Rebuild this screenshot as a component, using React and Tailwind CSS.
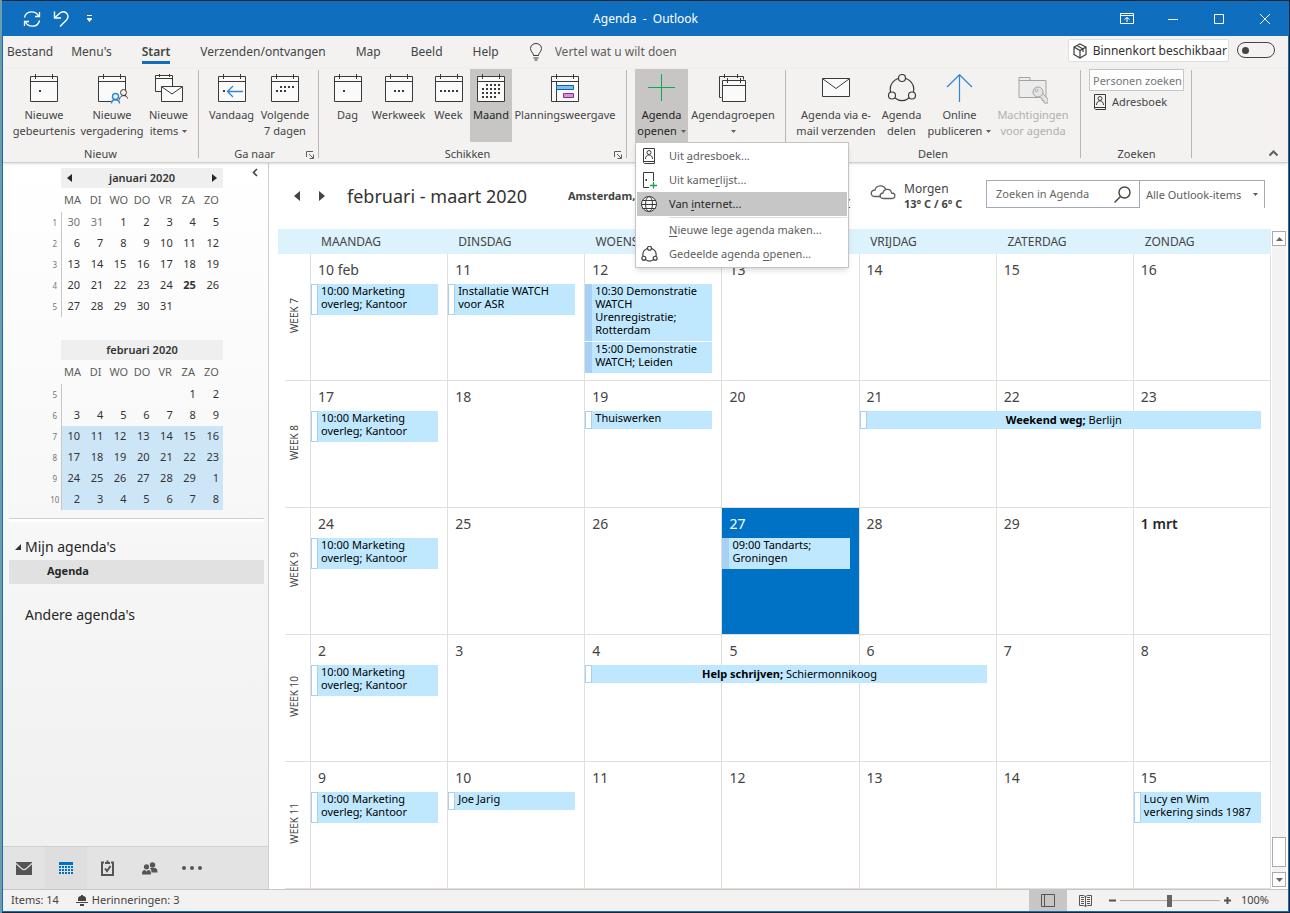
import clsx from 'clsx';

const ink = '#3b3a39';

const COL_START = ['col-start-1', 'col-start-2', 'col-start-3', 'col-start-4', 'col-start-5', 'col-start-6', 'col-start-7'];
const COL_SPAN = { 1: 'col-span-1', 3: 'col-span-3' };

const tabs = ['Bestand', "Menu's", 'Start', 'Verzenden/ontvangen', 'Map', 'Beeld', 'Help'];

const weekdays = ['MAANDAG', 'DINSDAG', 'WOENSDAG', 'DONDERDAG', 'VRIJDAG', 'ZATERDAG', 'ZONDAG'];

const marketing = { col: 0, items: [{ text: '10:00 Marketing overleg; Kantoor' }] };

const weeks = [
  {
    label: 'WEEK 7',
    days: ['10 feb', '11', '12', '13', '14', '15', '16'],
    events: [
      marketing,
      { col: 1, items: [{ text: 'Installatie WATCH voor ASR' }] },
      {
        col: 2,
        items: [
          { text: '10:30 Demonstratie WATCH Urenregistratie; Rotterdam', busy: true },
          { text: '15:00 Demonstratie WATCH; Leiden', busy: true },
        ],
      },
    ],
  },
  {
    label: 'WEEK 8',
    days: ['17', '18', '19', '20', '21', '22', '23'],
    events: [
      marketing,
      { col: 2, items: [{ text: 'Thuiswerken' }] },
      { col: 4, span: 3, items: [{ title: 'Weekend weg;', text: 'Berlijn' }] },
    ],
  },
  {
    label: 'WEEK 9',
    days: ['24', '25', '26', '27', '28', '29', '1 mrt'],
    today: 3,
    events: [marketing, { col: 3, items: [{ text: '09:00 Tandarts; Groningen', busy: true }] }],
  },
  {
    label: 'WEEK 10',
    days: ['2', '3', '4', '5', '6', '7', '8'],
    events: [marketing, { col: 2, span: 3, items: [{ title: 'Help schrijven;', text: 'Schiermonnikoog' }] }],
  },
  {
    label: 'WEEK 11',
    days: ['9', '10', '11', '12', '13', '14', '15'],
    events: [
      marketing,
      { col: 1, items: [{ text: 'Joe Jarig' }] },
      { col: 6, items: [{ text: 'Lucy en Wim verkering sinds 1987' }] },
    ],
  },
];

const january = [
  [1, ['30', '31', '1', '2', '3', '4', '5']],
  [2, ['6', '7', '8', '9', '10', '11', '12']],
  [3, ['13', '14', '15', '16', '17', '18', '19']],
  [4, ['20', '21', '22', '23', '24', '25', '26']],
  [5, ['27', '28', '29', '30', '31', '', '']],
];

const february = [
  [5, ['', '', '', '', '', '1', '2']],
  [6, ['3', '4', '5', '6', '7', '8', '9']],
  [7, ['10', '11', '12', '13', '14', '15', '16']],
  [8, ['17', '18', '19', '20', '21', '22', '23']],
  [9, ['24', '25', '26', '27', '28', '29', '1']],
  [10, ['2', '3', '4', '5', '6', '7', '8']],
];

/* ---------- icons ---------- */

function CalendarIcon({ children, dots = [] }) {
  return (
    <svg width="32" height="30" viewBox="-2 0 32 30" fill="none" stroke={ink}>
      <path d="M.5 2.5h27v25H.5z" fill="#fafafa" />
      <path d="M.5 7.5h27M5.5 0v5M22.5 0v5" />
      {dots.map(([x, y]) => (
        <rect key={`${x}-${y}`} x={x} y={y} width="2" height="2" fill={ink} stroke="none" />
      ))}
      {children}
    </svg>
  );
}

const row = (y, xs) => xs.map((x) => [x, y]);
const monthDots = [
  ...row(10, [9, 13, 17, 21]),
  ...row(14, [5, 9, 13, 17, 21]),
  ...row(18, [5, 9, 13, 17, 21]),
  ...row(22, [5, 9, 13, 17]),
];

function MeetingIcon() {
  return (
    <CalendarIcon>
      <path d="M13 22h16v8H13z" fill="#f3f2f1" stroke="none" />
      <circle cx="25.5" cy="18.5" r="3" fill="#f3f2f1" />
      <path d="M21.5 25.5c0-5 8-5 8-1" />
      <g stroke="#2b88d8" strokeWidth="1.4">
        <circle cx="17.5" cy="22.5" r="3" fill="#f3f2f1" />
        <path d="M13.5 29.5c0-5 8-5 8 0" />
      </g>
    </CalendarIcon>
  );
}

function NewItemsIcon() {
  return (
    <svg width="30" height="30" viewBox="0 0 30 30" fill="none" stroke={ink}>
      <path d="M1.5 1.5h17v16h-17z" fill="#fafafa" />
      <path d="M1.5 4.5h17M5.5 0v3M15.5 0v3" />
      <path d="M7.5 12.5h21v15h-21z" fill="#fafafa" />
      <path d="m8 13 10 7 10-7" />
    </svg>
  );
}

function PlanningIcon() {
  return (
    <CalendarIcon>
      <path d="M5.5 8v19" />
      <path d="M5.5 11.5h17v4h-17z" fill="#83beec" stroke="#0063b1" />
      <path d="M12.5 19.5h10v4h-10z" fill="#da8fd8" stroke="#8b2f95" />
    </CalendarIcon>
  );
}

function PlusIcon() {
  return (
    <svg width="30" height="30" viewBox="0 0 30 30" stroke="#10a850">
      <path d="M14.5 0v27M1 13.5h27" />
    </svg>
  );
}

function GroupsIcon() {
  return (
    <svg width="30" height="30" viewBox="0 0 30 30" fill="none" stroke={ink}>
      <path d="M3.5 23.5h-2v-21h24v3M6.5 0v4M19.5 0v4" />
      <path d="M4.5 6.5h23v21h-23z" fill="#fafafa" />
      <path d="M4.5 11.5h23M9.5 4v5M22.5 4v5" />
    </svg>
  );
}

function MailIcon() {
  return (
    <svg width="30" height="30" viewBox="0 0 30 30" fill="none" stroke={ink}>
      <path d="M1.5 4.5h27v18h-27z" fill="#fafafa" />
      <path d="m2 5 13 9.5L28 5" />
    </svg>
  );
}

function ShareIcon({ size = 30 }) {
  return (
    <svg width={size} height={size} viewBox="0 0 30 30" fill="none" stroke={ink} strokeWidth={size < 20 ? 2 : 1.2}>
      <path d="M11 4.5C5 7 2.5 12 3.5 18M19 4.5c6 2.5 8.5 7.5 7.5 13.5M8 24c4.5 3.5 9.5 3.5 14 0" />
      <circle cx="15" cy="4" r="3.5" />
      <circle cx="5" cy="21.5" r="3.5" />
      <circle cx="25" cy="21.5" r="3.5" />
    </svg>
  );
}

function PublishIcon() {
  return (
    <svg width="30" height="30" viewBox="0 0 30 30" fill="none" stroke="#2b88d8" strokeWidth="1.2">
      <path d="M14.5 28V1M2 13 14.5.7 27 13" />
    </svg>
  );
}

function PermissionsIcon() {
  return (
    <svg width="30" height="30" viewBox="0 0 30 30" fill="#ececec" stroke="#a3a3a3">
      <path d="M1 3.5h11v3h16v17H1z" />
      <path d="M1 6.5h11" />
      <path d="M23.5 18.5 30 25v4h-4v-2.5h-2V24h-2l-2-2z" fill="#e4e4e4" />
      <circle cx="20" cy="18" r="5" fill="#e4e4e4" />
      <circle cx="18.5" cy="16.5" r="1.2" fill="#fff" />
    </svg>
  );
}

function AddressBookIcon() {
  return (
    <svg width="16" height="18" viewBox="0 0 16 18" fill="none" stroke={ink}>
      <path d="M2.5 1.5h11v15h-10l-1-1zM2.5 14.5h11" />
      <circle cx="8" cy="5.5" r="2" />
      <path d="M4.5 12c0-5.5 7-5.5 7 0" />
    </svg>
  );
}

function RoomIcon() {
  return (
    <svg width="16" height="18" viewBox="0 0 16 18" fill="none" stroke={ink}>
      <path d="M8 16.5H2.5v-15h10V10" />
      <path d="M4.5 9h1.5" strokeWidth="2" />
      <path d="M12.5 11v6.5M9 14.5h7" stroke="#10a850" strokeWidth="1.3" />
    </svg>
  );
}

function GlobeIcon() {
  return (
    <svg width="18" height="18" viewBox="0 0 18 18" fill="none" stroke={ink}>
      <circle cx="9" cy="9" r="7.5" fill="#fafafa" />
      <ellipse cx="9" cy="9" rx="3.5" ry="7.5" />
      <path d="M2.5 5.5h13M1.5 9.5h15M2.5 13.5h13" />
    </svg>
  );
}

function Caret({ className }) {
  return (
    <svg width="5" height="3" viewBox="0 0 5 3" className={clsx('inline-block', className)} fill="#605e5c">
      <path d="M0 0h5L2.5 3z" />
    </svg>
  );
}

function Launcher() {
  return (
    <svg width="8" height="8" viewBox="0 0 8 8" fill="none" stroke="#605e5c">
      <path d="M.5 6V.5H7M3 3l4 4M7.5 3.5v4h-4" />
    </svg>
  );
}

/* ---------- title bar and tabs ---------- */

function TitleBar() {
  return (
    <header className="grid h-[35px] grid-cols-[1fr_auto_1fr] items-center bg-[#106ebe] text-white">
      <div className="flex items-center pl-5">
        <button aria-label="Verzenden/ontvangen" className="w-[30px]">
          <svg width="18" height="18" viewBox="0 0 18 18" fill="none" stroke="#fff" strokeWidth="1.3">
            <path d="M1.5 7.5C3 0 13 .5 15.5 6M16.5 2v4.5H12M16.5 10.5C15 18 5 17.5 2.5 12M1.5 16v-4.5H6" />
          </svg>
        </button>
        <button aria-label="Ongedaan maken" className="w-[33px]">
          <svg width="17" height="18" viewBox="0 0 17 18" fill="none" stroke="#fff" strokeWidth="1.4">
            <path d="M1.5 1.5V8H8M1.5 8 7 3c6-4 10 3 6.5 7L7 16.5" />
          </svg>
        </button>
        <button aria-label="Snelle toegang aanpassen">
          <svg width="7" height="8" viewBox="0 0 7 8" fill="#fff">
            <path d="M1 0h5v1H1zM1 3h5v1H1zM1 4h5L3.5 7z" />
          </svg>
        </button>
      </div>
      <h1 className="text-xs whitespace-pre">Agenda  -  Outlook</h1>
      <div className="flex justify-end">
        <button aria-label="Weergaveopties voor lint" className="flex w-[46px] justify-center">
          <svg width="14" height="12" viewBox="0 0 14 12" fill="none" stroke="#fff">
            <path d="M.5.5h13v10H.5zM.5 2.5h13M7 9V4.5M4.5 6.5 7 4.5l2.5 2" />
          </svg>
        </button>
        <button aria-label="Minimaliseren" className="flex w-[46px] justify-center">
          <svg width="10" height="12" stroke="#fff">
            <path d="M0 6.5h10" />
          </svg>
        </button>
        <button aria-label="Maximaliseren" className="flex w-[46px] justify-center">
          <svg width="10" height="12" fill="none" stroke="#fff">
            <path d="M.5 1.5h9v9h-9z" />
          </svg>
        </button>
        <button aria-label="Sluiten" className="flex w-[46px] justify-center">
          <svg width="10" height="12" stroke="#fff">
            <path d="m0 1 10 10M10 1 0 11" />
          </svg>
        </button>
      </div>
    </header>
  );
}

function TabRow() {
  return (
    <div className="flex h-[33px] items-start text-xs text-[#444]">
      <nav className="flex">
        {tabs.map((tab, i) => (
          <button
            key={tab}
            className={clsx('flex flex-col pt-[7px] leading-[18px]', i === 0 ? 'pr-[3px] pl-1' : 'px-[15px]', tab === 'Start' && 'font-semibold')}
          >
            {tab}
            {tab === 'Start' && <span className="h-[3px] w-full bg-[#106ebe]" />}
          </button>
        ))}
      </nav>
      <label className="ml-4 flex gap-[13px] pt-[7px] leading-[18px] text-[#605e5c]">
        <svg width="12" height="18" viewBox="0 0 12 18" fill="none" stroke={ink}>
          <path d="M3.5 12.5c0-3-3-3.5-3-7C.5 2.5 3 .5 6 .5s5.5 2 5.5 5c0 3.5-3 4-3 7zM3.5 15h5M4.5 17h3" />
        </svg>
        <input
          className="w-[200px] bg-transparent placeholder:text-[#605e5c] outline-none"
          placeholder="Vertel wat u wilt doen"
          aria-label="Vertel wat u wilt doen"
        />
      </label>
      <div className="ml-auto flex items-start gap-2 pt-[3px] pr-[13px]">
        <label
          htmlFor="coming-soon"
          className="flex h-[23px] items-center gap-1.5 rounded-xs border border-[#e1dfdd] bg-white pr-px pl-1 whitespace-nowrap text-[#323130]"
        >
          <svg width="14" height="16" viewBox="0 0 14 16" fill="none" stroke={ink} strokeWidth="1.2">
            <path d="m7 1 6 3v7.5l-6 3.5-6-3.5V4zM1 4l6 3.5L13 4M7 7.5V15M4 2.5l6 3.5v3" />
          </svg>
          Binnenkort beschikbaar
        </label>
        <input
          id="coming-soon"
          type="checkbox"
          role="switch"
          className="mt-[3px] flex h-4 w-[38px] appearance-none items-center rounded-full border border-[#444] bg-transparent pl-1 before:size-[7px] before:rounded-full before:bg-[#444]"
        />
      </div>
    </div>
  );
}

/* ---------- ribbon ---------- */

function RibbonButton({ icon, lines, width, active, disabled, caret }) {
  return (
    <button
      disabled={disabled}
      className={clsx(
        'flex h-[73px] flex-col items-center pt-[5px] text-[11px] leading-4 whitespace-nowrap',
        width,
        active && 'bg-[#c8c6c4] text-[#201f1e]',
        disabled && 'text-[#b1afad]'
      )}
    >
      <span className="flex h-[33px] items-start">{icon}</span>
      {lines.map((line, i) => (
        <span key={line}>
          {line}
          {caret && i === lines.length - 1 && <Caret className={clsx('mb-0.5', line && 'ml-1')} />}
        </span>
      ))}
    </button>
  );
}

function RibbonGroup({ label, launcher, children, className }) {
  return (
    <>
      <section className={clsx('flex flex-col', className)}>
        <div className="flex h-[73px] items-start">{children}</div>
        {label && (
          <div className="mt-1 flex items-center text-[11px] leading-4">
            <span className="flex-1 text-center">{label}</span>
            {launcher && (
              <button aria-label={`${label}: meer`} className="ml-1 pt-0.5">
                <Launcher />
              </button>
            )}
          </div>
        )}
      </section>
      <div className="mt-px mb-1 w-px bg-[#b9b7b5]" />
    </>
  );
}

const menuItems = [
  { icon: <AddressBookIcon />, text: ['Uit ', 'a', 'dresboek...'] },
  { icon: <RoomIcon />, text: ['Uit kame', 'r', 'lijst...'] },
  { icon: <GlobeIcon />, text: ['Van ', 'i', 'nternet...'], active: true },
  { divider: true },
  { text: ['', 'N', 'ieuwe lege agenda maken...'] },
  { icon: <ShareIcon size={17} />, text: ['Gedeelde agenda ', 'o', 'penen...'] },
];

function OpenMenu() {
  return (
    <div role="menu" className="absolute top-full left-0 z-10 w-[214px] border border-[#c6c4c2] bg-white p-px shadow-md">
      {menuItems.map(({ icon, text, active, divider }, i) =>
        divider ? (
          <div key={i} className="ml-8 h-0.5 border-b border-[#e1dfdd]" />
        ) : (
          <button
            key={i}
            role="menuitem"
            className={clsx('flex h-6 w-full items-center text-[11px]', active ? 'bg-[#c6c6c6] text-[#262626]' : 'text-[#605e5c]')}
          >
            <span className="flex w-6 justify-center">{icon}</span>
            <span className="ml-2 whitespace-pre">
              {text[0]}
              <u className="underline-offset-2">{text[1]}</u>
              {text[2]}
            </span>
          </button>
        )
      )}
    </div>
  );
}

function Ribbon() {
  return (
    <div className="relative z-10 flex h-[94px] border-b border-[#d2d0ce] text-[#444] shadow-sm">
      <RibbonGroup label="Nieuw" className="px-[7px]">
        <RibbonButton width="w-[68px]" lines={['Nieuwe', 'gebeurtenis']} icon={<CalendarIcon dots={[[9, 16]]} />} />
        <RibbonButton width="w-[68px]" lines={['Nieuwe', 'vergadering']} icon={<MeetingIcon />} />
        <RibbonButton width="w-[45px]" lines={['Nieuwe', 'items']} caret icon={<NewItemsIcon />} />
      </RibbonGroup>
      <RibbonGroup label="Ga naar" launcher className="pr-1 pl-2">
        <RibbonButton
          width="w-[49px]"
          lines={['Vandaag']}
          icon={
            <CalendarIcon dots={[[5, 16]]}>
              <path d="M25 17.5H10M15 12l-5.5 5.5L15 23" stroke="#2b88d8" strokeWidth="1.3" />
            </CalendarIcon>
          }
        />
        <RibbonButton
          width="w-[58px]"
          lines={['Volgende', '7 dagen']}
          icon={<CalendarIcon dots={[...row(12, [9, 13, 17, 21]), ...row(16, [5, 9, 13])]} />}
        />
      </RibbonGroup>
      <RibbonGroup label="Schikken" launcher className="pr-1 pl-1.5">
        <RibbonButton width="w-[45px]" lines={['Dag']} icon={<CalendarIcon dots={[[9, 16]]} />} />
        <RibbonButton width="w-[57px]" lines={['Werkweek']} icon={<CalendarIcon dots={row(16, [9, 13, 17])} />} />
        <RibbonButton width="w-[43px]" lines={['Week']} icon={<CalendarIcon dots={row(16, [5, 9, 13, 17, 21])} />} />
        <RibbonButton width="w-[42px]" lines={['Maand']} active icon={<CalendarIcon dots={monthDots} />} />
        <RibbonButton width="w-[106px]" lines={['Planningsweergave']} icon={<PlanningIcon />} />
        <div className="w-1" />
      </RibbonGroup>
      <RibbonGroup className="pr-[7px] pl-2">
        <div className="relative">
          <RibbonButton width="w-[53px]" lines={['Agenda', 'openen']} caret active icon={<PlusIcon />} />
          <OpenMenu />
        </div>
        <RibbonButton width="w-[90px]" lines={['Agendagroepen', '']} caret icon={<GroupsIcon />} />
      </RibbonGroup>
      <RibbonGroup label="Delen" className="px-2">
        <RibbonButton width="w-[84px]" lines={['Agenda via e-', 'mail verzenden']} icon={<MailIcon />} />
        <RibbonButton width="w-[47px]" lines={['Agenda', 'delen']} icon={<ShareIcon />} />
        <RibbonButton width="w-[69px]" lines={['Online', 'publiceren']} caret icon={<PublishIcon />} />
        <RibbonButton width="w-[78px]" lines={['Machtigingen', 'voor agenda']} disabled icon={<PermissionsIcon />} />
      </RibbonGroup>
      <RibbonGroup label="Zoeken" className="pr-[7px] pl-2">
        <div className="flex flex-col items-start gap-0.5">
          <input
            className="h-[22px] w-[95px] border border-[#c8c6c4] bg-white pl-[3px] text-[11px] placeholder:text-[#767676] outline-none"
            placeholder="Personen zoeken"
            aria-label="Personen zoeken"
          />
          <button className="flex items-center gap-1 pl-[3px] text-[11px] leading-4">
            <AddressBookIcon />
            Adresboek
          </button>
        </div>
      </RibbonGroup>
      <button aria-label="Lint samenvouwen" className="mt-auto mr-2.5 mb-1 ml-auto">
        <svg width="9" height="9" viewBox="0 0 9 9" fill="none" stroke="#605e5c" strokeWidth="2">
          <path d="m.5 6.5 4-4 4 4" />
        </svg>
      </button>
    </div>
  );
}

/* ---------- sidebar ---------- */

function MiniMonth({ title, rows, nav, boldDay, mutedDays = [], selectedFrom = 99 }) {
  return (
    <div>
      <div className="ml-3 flex h-5 items-center justify-center bg-[#efefef]">
        {nav && (
          <button aria-label="Vorige maand" className="ml-1.5">
            <svg width="5" height="8" fill="#262626">
              <path d="M5 0v8L0 4z" />
            </svg>
          </button>
        )}
        <h2 className="flex-1 text-center text-[11px] font-semibold text-[#333]">{title}</h2>
        {nav && (
          <button aria-label="Volgende maand" className="mr-1.5">
            <svg width="5" height="8" fill="#262626">
              <path d="M0 0v8l5-4z" />
            </svg>
          </button>
        )}
      </div>
      <table className="w-full table-fixed border-collapse text-[11px] text-[#333]">
        <thead>
          <tr className="h-6 text-[#605e5c]">
            <th className="w-3" />
            {['MA', 'DI', 'WO', 'DO', 'VR', 'ZA', 'ZO'].map((d) => (
              <th key={d} className="p-0 text-center font-normal">
                {d}
              </th>
            ))}
          </tr>
        </thead>
        <tbody>
          {rows.map(([week, days]) => (
            <tr key={week} className="h-[21px]">
              <th className="border-r border-[#c8c6c4] p-0 text-[8px] font-normal text-[#767676]">{week}</th>
              {days.map((day, i) => (
                <td
                  key={i}
                  className={clsx(
                    'p-0 pr-1 text-right',
                    week >= selectedFrom && 'bg-[#cde6f7]',
                    day && day === boldDay && 'font-bold',
                    week === 1 && mutedDays.includes(day) && 'text-[#767676]'
                  )}
                >
                  {day}
                </td>
              ))}
            </tr>
          ))}
        </tbody>
      </table>
    </div>
  );
}

function NavBar() {
  return (
    <nav className="flex h-[43px] border-t border-[#d0d0d0] bg-[#e3e3e3]">
      <button aria-label="E-mail" className="flex w-[42px] items-center justify-center">
        <svg width="16" height="13" viewBox="0 0 16 13" fill="#555">
          <path d="M0 0h16v13H0z" />
          <path d="m0 1.5 5.5 5c1.5 1.3 3.5 1.3 5 0l5.5-5" fill="none" stroke="#e3e3e3" strokeWidth="1.2" />
        </svg>
      </button>
      <button aria-label="Agenda" className="flex w-[42px] items-center justify-center bg-[#dedede]">
        <svg width="14" height="12" viewBox="0 0 14 12" fill="#0072c6">
          <path d="M0 0h14v3H0z" />
          {[4, 7, 10].map((y) => [0, 3, 6, 9, 12].map((x) => <path key={`${x}-${y}`} d={`M${x} ${y}h2v2h-2z`} />))}
        </svg>
      </button>
      <button aria-label="Taken" className="flex w-[41px] items-center justify-center">
        <svg width="13" height="16" viewBox="0 0 13 16" fill="none" stroke="#555" strokeWidth="2">
          <path d="M3 2.5H1V15h11V2.5h-2" />
          <path d="M4 3h5M6.500.5v2M4 8.500l2 2.500 3.500-5" />
        </svg>
      </button>
      <button aria-label="Personen" className="flex w-[43px] items-center justify-center">
        <svg width="16" height="13" viewBox="0 0 16 13" fill="#555">
          <circle cx="10.5" cy="3" r="2.7" />
          <path d="M7.5 6h5c2.5 0 3 1.5 3 4.5H9.5C9.5 8 9 7 7.5 6z" />
          <circle cx="4.5" cy="4.8" r="2.6" />
          <path d="M0 12.5C0 9 1 8 3 8l1.5 1.5L6 8c2 0 3 1 3 4.500z" />
        </svg>
      </button>
      <button aria-label="Meer" className="flex w-[42px] items-center justify-center">
        <svg width="20" height="4" fill="#555">
          <circle cx="2" cy="2" r="2" />
          <circle cx="10" cy="2" r="2" />
          <circle cx="18" cy="2" r="2" />
        </svg>
      </button>
    </nav>
  );
}

function Sidebar() {
  return (
    <aside className="flex w-[266px] shrink-0 flex-col border-r border-[#d2d0ce] bg-linear-to-b from-white to-[#efefef]">
      <div className="flex items-start pt-[5px] pr-2.5 pl-[46px]">
        <div className="flex w-[174px] flex-col gap-[23px]">
          <MiniMonth title="januari 2020" rows={january} nav boldDay="25" mutedDays={['30', '31']} />
          <MiniMonth title="februari 2020" rows={february} selectedFrom={7} />
        </div>
        <button aria-label="Mappenvenster minimaliseren" className="ml-auto">
          <svg width="6" height="9" viewBox="0 0 6 9" fill="none" stroke="#444" strokeWidth="1.6">
            <path d="m5 1-3.5 3.5L5 8" />
          </svg>
        </button>
      </div>
      <div className="mt-2 mr-1 ml-1.5 h-1 border-t border-[#d2d0ce] bg-white" />
      <div className="mr-1 ml-1.5 text-[#262626]">
        <h2 className="mt-[13px] flex h-6 items-center gap-1 pl-1.5 text-sm">
          <svg width="6" height="6" fill="#333">
            <path d="M6 0v6H0z" />
          </svg>
          Mijn agenda's
        </h2>
        <button className="mt-px block h-6 w-full bg-[#e1e1e1] pb-0.5 pl-[38px] text-left text-[11px] font-bold">Agenda</button>
        <h2 className="mt-[19px] flex h-6 items-center pl-4 text-sm">Andere agenda's</h2>
      </div>
      <div className="mt-auto">
        <NavBar />
      </div>
    </aside>
  );
}

/* ---------- month view ---------- */

function CalendarHeader() {
  return (
    <div className="flex h-[66px] items-center pr-[23px] pl-6 text-[#444]">
      <button aria-label="Vorige">
        <svg width="7" height="10" fill="#444">
          <path d="M7 0v10L1 5z" />
        </svg>
      </button>
      <button aria-label="Volgende" className="ml-[19px]">
        <svg width="7" height="10" fill="#444">
          <path d="M0 0v10l6-5z" />
        </svg>
      </button>
      <h2 className="ml-[21px] w-[221px] text-lg whitespace-nowrap text-[#333]">februari - maart 2020</h2>
      <div className="flex flex-1 items-center">
        <span className="w-[275px] text-[11px] font-bold">Amsterdam,</span>
        <span className="w-2 pt-4 text-xs">C</span>
        <svg width="26" height="16" viewBox="0 0 26 16" fill="none" stroke="#605e5c" strokeWidth="1.3" className="-mt-2 ml-[19px]">
          <path d="M11 12.5H5C0 12.5 0 6 5 6c1-5 9-6 11 0" />
          <path d="M14 14.5c-5 0-5-5-1-5.5 1-5 8-4.5 8.5 0 4.5 0 4.5 5.5 0 5.5z" fill="#fff" />
        </svg>
        <div className="ml-2 leading-[15px] whitespace-nowrap">
          <div className="text-xs leading-[15px]">Morgen</div>
          <div className="text-[11px] font-bold">13° C / 6° C</div>
        </div>
      </div>
      <form className="mb-1 flex h-7 border border-[#a3aab5]">
        <input
          type="search"
          className="w-[127px] pl-[9px] text-[11px] placeholder:text-[#666] outline-none"
          placeholder="Zoeken in Agenda"
          aria-label="Zoeken in Agenda"
        />
        <button type="button" aria-label="Zoeken" className="w-[25px]">
          <svg width="17" height="17" viewBox="0 0 17 17" fill="none" stroke="#444" strokeWidth="1.4">
            <circle cx="10.5" cy="6.5" r="5.5" />
            <path d="M6.500 10.500.5 16.500" />
          </svg>
        </button>
        <div className="relative border-l border-[#a3aab5]">
          <select aria-label="Zoekbereik" className="h-full w-[124px] appearance-none bg-white pl-1.5 text-[11px] text-[#605e5c] outline-none">
            <option>Alle Outlook-items</option>
          </select>
          <Caret className="pointer-events-none absolute top-3 right-1.5" />
        </div>
      </form>
    </div>
  );
}

function Event({ title, text, busy }) {
  return (
    <div className="mr-[9px] flex bg-[#bfe8ff] text-[11px] leading-[13px] text-black">
      <span className={clsx('w-[7px] shrink-0 border border-[#a6d1f5]', busy ? 'bg-[#a6d1f5]' : 'bg-white')} />
      <span className={clsx('flex-1', title ? 'pt-0.5 pb-[3px] text-center' : 'pr-2 pb-[5px] pl-[3px]')}>
        {title && <b className="font-bold">{title} </b>}
        {text}
      </span>
    </div>
  );
}

function WeekRow({ label, days, today, events }) {
  return (
    <div className="ml-[7px] flex min-h-[127px] flex-1 border-b border-[#e1dfdd]">
      <div className="flex w-[25px] items-center justify-center pr-1.5 pb-1 text-[10px] text-[#444]">
        <span className="rotate-180 [writing-mode:vertical-rl]">{label}</span>
      </div>
      <div className="grid flex-1 grid-cols-7 grid-rows-[30px_1fr] border-r border-[#e1dfdd]">
        {days.map((day, i) => (
          <div
            key={day}
            className={clsx(
              'row-span-2 row-start-1 border-l border-[#e1dfdd] pt-1.5 pl-[7px] text-sm leading-5',
              COL_START[i],
              i === today ? 'bg-[#0072c6] text-white' : 'text-[#444]',
              day === '1 mrt' && 'font-semibold text-[#262626]'
            )}
          >
            {day}
          </div>
        ))}
        {events.map(({ col, span = 1, items }) => (
          <div key={col} className={clsx('row-start-2 ml-px flex flex-col gap-px', COL_START[col], COL_SPAN[span])}>
            {items.map((item) => (
              <Event key={item.text} {...item} />
            ))}
          </div>
        ))}
      </div>
    </div>
  );
}

function ScrollBar() {
  const box = 'flex items-center justify-center border border-[#ababab] bg-white';
  return (
    <div className="mt-0.5 mr-0.5 mb-0.5 ml-px flex w-[14px] flex-col bg-[#f3f3f3]">
      <button aria-label="Omhoog" className={clsx(box, 'h-[15px]')}>
        <svg width="7" height="4" fill="#666">
          <path d="M0 4h7L3.5 0z" />
        </svg>
      </button>
      <div className="mt-auto mb-[5px] h-[30px] border border-[#ababab] bg-white" />
      <button aria-label="Omlaag" className={clsx(box, 'h-[15px]')}>
        <svg width="7" height="4" fill="#666">
          <path d="M0 0h7L3.5 4z" />
        </svg>
      </button>
    </div>
  );
}

function MonthView() {
  return (
    <main className="flex min-w-0 flex-1 flex-col bg-white">
      <CalendarHeader />
      <div className="flex flex-1">
        <div className="ml-[9px] flex flex-1 flex-col">
          <div className="flex h-[25px] items-center bg-[#dcf2fd] pl-8 text-xs text-[#444]">
            {weekdays.map((d) => (
              <div key={d} className="flex-1 pl-[11px]">
                {d}
              </div>
            ))}
          </div>
          {weeks.map((week) => (
            <WeekRow key={week.label} {...week} />
          ))}
        </div>
        <ScrollBar />
      </div>
    </main>
  );
}

function StatusBar() {
  return (
    <footer className="flex h-[22px] items-center border-t border-[#c8c6c4] text-[11px] text-[#444]">
      <span className="ml-2">Items: 14</span>
      <button className="ml-[17px] flex items-center gap-1">
        <svg width="12" height="11" viewBox="0 0 12 11" fill="#444">
          <path d="M5 0h2v1c2 0 3 1 3 3v2H2V4c0-2 1-3 3-3zM4 9h4v2H4zM0 7h12v1H0z" />
        </svg>
        Herinneringen: 3
      </button>
      <button aria-label="Normaal" className="ml-auto flex h-full w-[38px] items-center justify-center bg-[#c8c6c4]">
        <svg width="14" height="13" fill="none" stroke="#555">
          <path d="M.5.5h13v12H.5zM3.500.5v12" />
        </svg>
      </button>
      <button aria-label="Lezen" className="flex h-full w-[38px] items-center justify-center">
        <svg width="13" height="13" viewBox="0 0 13 13" fill="none" stroke="#555">
          <path d="M.5 1.5h4l2 1 2-1h4v10h-4l-2 1-2-1h-4zM6.5 2v10M2 3.5h3M2 5.5h3M2 7.5h3M2 9.5h3M8 3.5h3M8 5.5h3M8 7.5h3M8 9.5h3" />
        </svg>
      </button>
      <button aria-label="Uitzoomen" className="ml-1">
        <svg width="7" height="7" fill="#555">
          <path d="M0 2.500h7v2H0z" />
        </svg>
      </button>
      <input
        type="range"
        aria-label="Zoomen"
        defaultValue="50"
        className="mx-1 h-3 w-[100px] appearance-none bg-linear-to-b from-transparent from-45% via-[#ababab] via-45% to-transparent to-55% [&::-webkit-slider-thumb]:h-3 [&::-webkit-slider-thumb]:w-[5px] [&::-webkit-slider-thumb]:appearance-none [&::-webkit-slider-thumb]:bg-[#666]"
      />
      <button aria-label="Inzoomen">
        <svg width="7" height="7" fill="#555">
          <path d="M0 2.5h7v2H0zM2.500 0h2v7h-2z" />
        </svg>
      </button>
      <span className="mr-[19px] ml-2.5">100%</span>
    </footer>
  );
}

export default function App() {
  return (
    <div className="flex min-h-screen flex-col border-l-2 border-[#6c9cae] bg-[#1d2733] pt-px pr-px pb-px font-['Noto_Sans','Segoe_UI',sans-serif]">
      <div className="flex flex-1 flex-col border-x border-b border-[#106ebe] bg-[#f3f2f1]">
        <TitleBar />
        <TabRow />
        <Ribbon />
        <div className="flex flex-1">
          <Sidebar />
          <MonthView />
        </div>
        <StatusBar />
      </div>
    </div>
  );
}
